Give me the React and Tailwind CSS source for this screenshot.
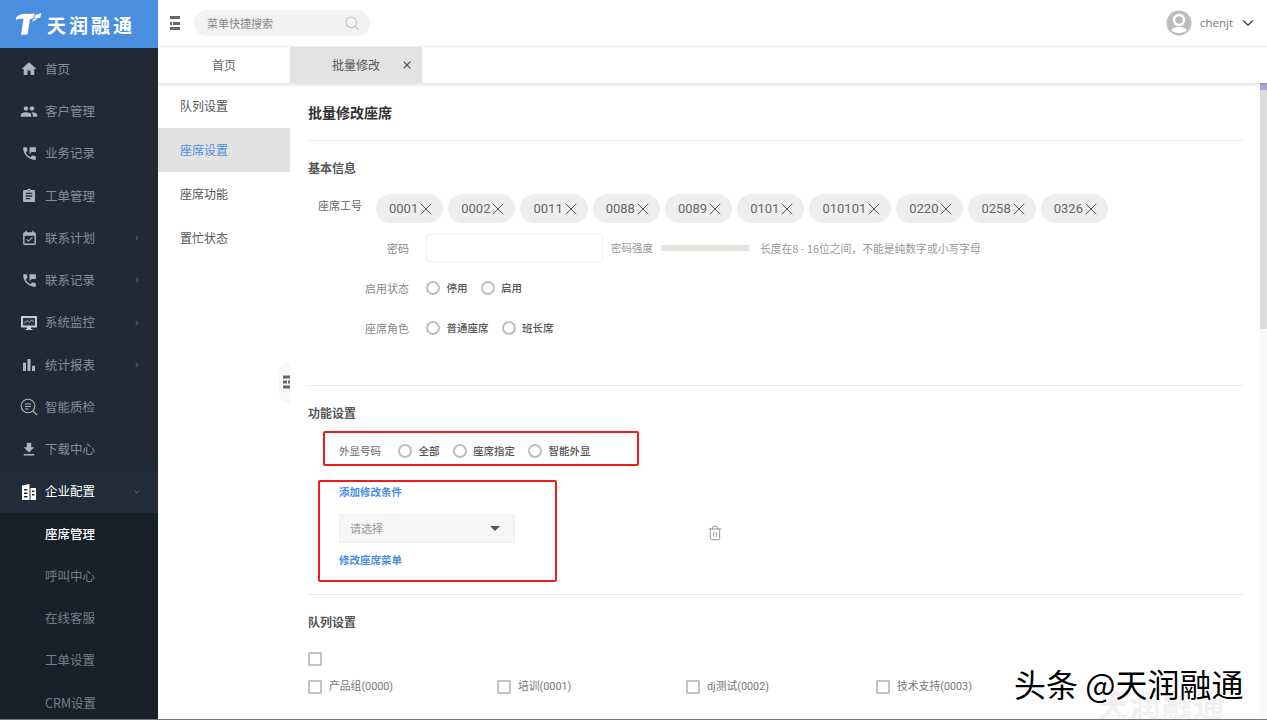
import {
  MdHome, MdPeople, MdPermPhoneMsg, MdAssignment, MdEventAvailable, MdBarChart, MdFileDownload,
} from "react-icons/md";
import { ChevronRight, ChevronDown, Search, Trash2, X } from "lucide-react";

const FONT = { fontFamily: '"Noto Sans CJK SC", sans-serif' };

function MonitorIcon({ size = 18 }) {
  return (
    <svg width={size} height={size} viewBox="0 0 18 18">
      <path fill="#c3ced8" d="M1 2h16v11.500h-6V15h1.500v1h-7v-1H7v-1.500H1z" />
      <path d="M3 4h12v7.500H3z" fill="#2a3744" />
      <path d="M4 9.500l3-3 2.500 2 2-2.500 2.500 2" fill="none" stroke="#c3ced8" strokeWidth="0.800" />
    </svg>
  );
}

function InspectIcon({ size = 18 }) {
  return (
    <svg width={size} height={size} viewBox="0 0 18 18" fill="none" stroke="currentColor" strokeWidth="1.100">
      <circle cx="8" cy="8" r="6.800" />
      <path d="M5 6h6M5 8.500h6M5 11h3.500M13 13l4 4" />
    </svg>
  );
}

function BuildingIcon({ size = 16 }) {
  return (
    <svg width={size} height={size} viewBox="0 0 16 16" fill="currentColor">
      <path fillRule="evenodd" d="M1 1.500L8.500 0v16H1zM3 5v1.500h3.500V5zM3 8.500V10h3.500V8.500zM3 12v1.500h3.500V12z" />
      <path fillRule="evenodd" d="M9.500 4H15v12H9.500zM11 6.500V8h2.500V6.500zM11 10v1.500h2.500V10z" />
    </svg>
  );
}

const MENU = [
  { label: "首页", icon: <MdHome size={18} /> },
  { label: "客户管理", icon: <MdPeople size={19} /> },
  { label: "业务记录", icon: <MdPermPhoneMsg size={17} /> },
  { label: "工单管理", icon: <MdAssignment size={16} /> },
  { label: "联系计划", icon: <MdEventAvailable size={17} />, arrow: true },
  { label: "联系记录", icon: <MdPermPhoneMsg size={17} />, arrow: true },
  { label: "系统监控", icon: <MonitorIcon />, arrow: true },
  { label: "统计报表", icon: <MdBarChart size={20} />, arrow: true },
  { label: "智能质检", icon: <InspectIcon /> },
  { label: "下载中心", icon: <MdFileDownload size={19} /> },
];

const SUBMENU = ["座席管理", "呼叫中心", "在线客服", "工单设置", "CRM设置"];
const CHIPS = ["0001", "0002", "0011", "0088", "0089", "0101", "010101", "0220", "0258", "0326"];
const SUBNAV = ["队列设置", "座席设置", "座席功能", "置忙状态"];
const QUEUES = ["产品组(0000)", "培训(0001)", "dj测试(0002)", "技术支持(0003)"];

function Radio({ label, className = "" }) {
  return (
    <label className={`flex items-center ${className}`}>
      <span className="w-[14px] h-[14px] rounded-full border-2 border-[#bdbdbd] bg-white shrink-0" />
      <span className="ml-[6.500px] text-[10.500px] font-medium text-[#555]">{label}</span>
    </label>
  );
}

function Check({ label }) {
  return (
    <div className="flex items-center">
      <span className="w-[14px] h-[14px] rounded-[1px] border-2 border-[#c4c4c4] shrink-0" />
      <span className="ml-[7px] text-[10.800px] text-[#777] [font-family:Roboto,'Noto_Sans_CJK_SC',sans-serif]">{label}</span>
    </div>
  );
}

function ListIcon({ className = "", bar = "h-[3px]" }) {
  return (
    <span className={`flex flex-col gap-[2.500px] ${className}`}>
      <span className={`${bar} bg-[#666]`} />
      <span className="flex gap-[1px]">
        <span className={`${bar} w-[2px] bg-[#666]`} />
        <span className={`${bar} flex-1 bg-[#666]`} />
      </span>
      <span className={`${bar} bg-[#666]`} />
    </span>
  );
}

function Sidebar() {
  return (
    <aside className="w-[158px] shrink-0 bg-[#1f2a36] flex flex-col">
      <div className="h-[48px] shrink-0 bg-[#4a8fdf] flex items-center pl-[16px] text-white">
        <svg width="26" height="24" viewBox="0 0 26 24" fill="currentColor">
          <path d="M0 5.500C3 2 8 1.500 12 2L19 1.500 17 6.500 14 7 11.500 22.500 5 23 7.500 7C5 6.500 2.500 6.500 0 8z" />
          <path d="M19.500 3L25.500 1 24 6 18 6.500z" />
          <path d="M17.500 7L22 6.500 16 10z" />
        </svg>
        <span className="ml-[5px] text-[19px] font-bold tracking-[3px] leading-none">天润融通</span>
      </div>
      {MENU.map((m) => (
        <div key={m.label} className="h-[42.25px] shrink-0 flex items-center text-[#80909f]">
          <span className="w-[18px] ml-[20px] flex justify-center text-[#a9b6c2]">{m.icon}</span>
          <span className="ml-[7px] text-[12.500px]">{m.label}</span>
          {m.arrow && <ChevronRight size={8} strokeWidth={2} className="ml-[38px]" />}
        </div>
      ))}
      <div className="h-[42.25px] shrink-0 flex items-center bg-[#212d3a] text-white">
        <span className="w-[18px] ml-[20px] flex justify-center"><BuildingIcon /></span>
        <span className="ml-[7px] text-[12.500px]">企业配置</span>
        <ChevronDown size={8} strokeWidth={2} className="ml-[38px] text-[#80909f]" />
      </div>
      <div className="flex-1 bg-[#17212b]">
        {SUBMENU.map((s, i) => (
          <div
            key={s}
            className={`h-[42.25px] flex items-center pl-[45px] text-[12.500px] ${i === 0 ? "text-white font-medium" : "text-[#71808e]"}`}
          >
            {s}
          </div>
        ))}
      </div>
    </aside>
  );
}

function Header() {
  return (
    <header className="h-[47px] shrink-0 flex items-center bg-white border-b border-[#eeeeee]">
      <ListIcon className="w-[10px] ml-[12px]" />
      <div className="ml-[14px] w-[176px] h-[26px] rounded-full bg-[#f2f2f2] flex items-center pl-[13px] pr-[10px] justify-between">
        <span className="text-[11px] text-[#8a8a8a]">菜单快捷搜索</span>
        <Search size={16} strokeWidth={1.800} className="text-[#c4c4c4]" />
      </div>
      <div className="ml-auto flex items-center pr-[10px]">
        <svg width="26" height="26" viewBox="0 0 26 26">
          <circle cx="13" cy="13" r="12.500" fill="#bdbdbd" />
          <circle cx="13" cy="10" r="5" fill="none" stroke="#fff" strokeWidth="2.500" />
          <ellipse cx="13" cy="20" rx="7.500" ry="3" fill="#fff" />
        </svg>
        <span className="ml-[8px] text-[11.500px] text-[#777] [font-family:'Open_Sans',sans-serif]">chenjt</span>
        <ChevronDown size={18} strokeWidth={1.500} className="ml-[6px] text-[#333]" />
      </div>
    </header>
  );
}

function Tabs() {
  return (
    <div className="h-[36px] shrink-0 flex bg-white shadow-[0_2px_3px_rgba(0,0,0,0.12)] relative">
      <div className="w-[132px] flex items-center justify-center text-[12px] text-[#666]">首页</div>
      <div className="w-[132px] bg-[#e3e3e3] flex items-center text-[12px] text-[#555] pl-[42px]">
        批量修改
        <X size={12} strokeWidth={2.200} className="ml-[21px] text-[#555]" />
      </div>
    </div>
  );
}

function SubNav() {
  return (
    <nav className="w-[132px] shrink-0 pt-[1px] relative">
      {SUBNAV.map((s, i) => (
        <div
          key={s}
          className={`h-[44px] flex items-center pl-[22px] text-[12px] ${i === 1 ? "bg-[#e2e2e2] text-[#4a8fdf]" : "text-[#555]"}`}
        >
          {s}
        </div>
      ))}
      <div className="absolute right-0 top-[279px] w-[11px] h-[41px] bg-[#f7f7f7] rounded-l-[10px] flex items-center justify-end">
        <ListIcon className="w-[7px] rotate-180" bar="h-[2.500px]" />
      </div>
    </nav>
  );
}

function FieldRow({ label, children, className = "" }) {
  return (
    <div className={`flex items-center h-[28px] ${className}`}>
      <span className="w-[101px] text-right text-[11px] text-[#8a8a8a]">{label}</span>
      <div className="ml-[17px] flex items-center">{children}</div>
    </div>
  );
}

function Content() {
  return (
    <main className="flex-1 min-w-0 pl-[18px] pr-[17px] overflow-hidden bg-white">
      <div className="h-[58px] pt-[2px] flex items-center border-b border-[#e8e8e8] text-[14px] font-bold text-[#333]">
        批量修改座席
      </div>
      <h2 className="h-[53px] flex items-center text-[12px] font-bold text-[#555]">基本信息</h2>

      <div className="flex h-[29px]">
        <span className="w-[68px] pl-[10px] pt-[3px] text-[11px] leading-[16px] text-[#666]">座席工号</span>
        <div className="flex gap-[5px]">
          {CHIPS.map((c) => (
            <span
              key={c}
              className="h-[29px] pl-[13px] pr-[7px] rounded-full bg-[#eeeeee] flex items-center text-[13px] text-[#666] [font-family:Roboto,sans-serif]"
            >
              {c}
              <X size={20} strokeWidth={1.100} className="-ml-[2px] text-[#444]" />
            </span>
          ))}
        </div>
      </div>

      <FieldRow label="密码" className="mt-[11px]">
        <div className="w-[177px] h-[28px] border border-[#efefef] rounded-[2px]" />
        <span className="ml-[8px] text-[10.500px] text-[#999]">密码强度</span>
        <span className="ml-[8px] w-[88px] h-[6px] bg-[#e4e4de]" />
        <span className="ml-[11px] text-[10.800px] text-[#999]">长度在8 - 16位之间，不能是纯数字或小写字母</span>
      </FieldRow>
      <FieldRow label="启用状态" className="mt-[12px]">
        <Radio label="停用" />
        <Radio label="启用" className="ml-[13px]" />
      </FieldRow>
      <FieldRow label="座席角色" className="mt-[12px]">
        <Radio label="普通座席" />
        <Radio label="班长席" className="ml-[13px]" />
      </FieldRow>

      <div className="mt-[43px] border-b border-[#e8e8e8]" />
      <h2 className="mt-[9px] h-[36px] flex items-center text-[12px] font-bold text-[#555]">功能设置</h2>

      <div className="ml-[15px] w-[316px] h-[35px] border-2 border-[#f01c1c] rounded-[2px] flex items-center pl-[14px] pt-[4px]">
        <span className="text-[10.500px] text-[#666] mr-[17px]">外显号码</span>
        <Radio label="全部" />
        <Radio label="座席指定" className="ml-[13px]" />
        <Radio label="智能外显" className="ml-[13px]" />
      </div>

      <div className="mt-[14px] flex items-center">
        <div className="ml-[10px] w-[239px] h-[102px] border-2 border-[#f01c1c] rounded-[2px] pl-[19px]">
          <div className="h-[20px] leading-[20px] text-[10.500px] font-bold text-[#4a8fdf]">添加修改条件</div>
          <div className="mt-[12px] w-[176px] h-[29px] bg-[#f6f6f6] border border-[#f0f0f0] flex items-center justify-between pl-[10px] pr-[14px]">
            <span className="text-[11px] text-[#999]">请选择</span>
            <span className="w-0 h-0 border-x-[5px] border-x-transparent border-t-[5px] border-t-[#555]" />
          </div>
          <div className="mt-[7px] h-[20px] leading-[20px] text-[10.500px] font-bold text-[#4a8fdf]">修改座席菜单</div>
        </div>
        <Trash2 size={16} strokeWidth={1.100} className="ml-[150px] mt-[4px] text-[#777]" />
      </div>

      <div className="mt-[12px] border-b border-[#e8e8e8]" />
      <h2 className="h-[54px] flex items-center text-[12px] font-bold text-[#555]">队列设置</h2>

      <span className="mt-[3px] block w-[14px] h-[14px] rounded-[1px] border-2 border-[#c4c4c4]" />
      <div className="mt-[13px] grid grid-cols-[189px_189px_190px_190px]">
        {QUEUES.map((q) => <Check key={q} label={q} />)}
      </div>
      <div className="mt-[25px] grid grid-cols-[189px_189px_190px_190px]">
        {QUEUES.map((q) => <Check key={q} label="" />)}
      </div>
    </main>
  );
}

export default function App() {
  return (
    <div className="relative w-[1267px] h-[720px] flex overflow-hidden bg-white" style={FONT}>
      <Sidebar />
      <div className="flex-1 min-w-0 flex flex-col">
        <Header />
        <Tabs />
        <div className="flex-1 min-h-0 flex">
          <SubNav />
          <Content />
          <div className="w-[7px] shrink-0 bg-[#fafafa]">
            <div className="h-[7px] bg-[#a9a5d6]" />
            <div className="h-[239px] bg-[#dcdcdc]" />
          </div>
        </div>
      </div>

      {/* watermark over the page */}
      <div className="absolute left-[1098px] top-[688px] text-[30px] font-bold leading-[30px] tracking-[2px] text-[#f0f0f0]">天润融通</div>
      <div className="absolute left-[1014px] top-[666px] text-[32px] leading-[34px] text-black whitespace-nowrap [text-shadow:1px_1px_0_#fff,-1px_-1px_0_#fff,1px_-1px_0_#fff,-1px_1px_0_#fff]">
        头条 @天润融通
      </div>
      <div className="absolute left-0 right-0 bottom-0 h-px bg-[#777]" />
    </div>
  );
}
